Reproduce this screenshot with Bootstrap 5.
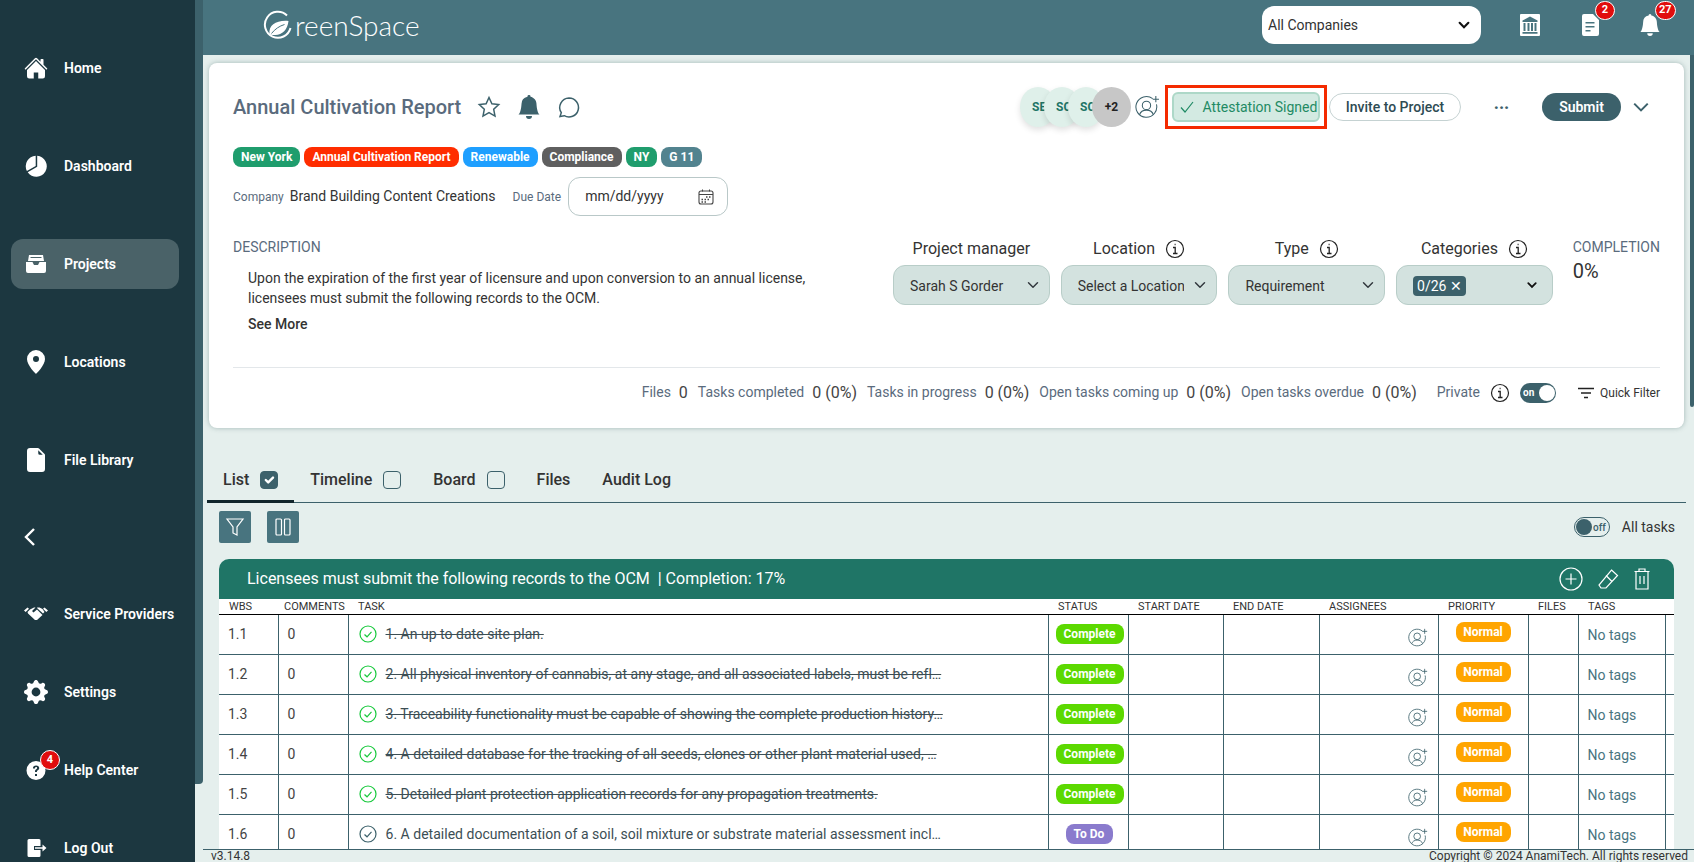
<!DOCTYPE html>
<html lang="en">
<head>
<meta charset="utf-8">
<title>GreenSpace</title>
<link href="https://cdn.jsdelivr.net/npm/bootstrap@5.3.0/dist/css/bootstrap.min.css" rel="stylesheet">
<style>
html,body{height:100%;overflow:hidden}
body{font-family:Roboto,"Liberation Sans",sans-serif;background:#e5efed;color:#333;font-size:14px}
.app-shell{height:862px;display:flex}
.side-nav{width:195px;flex:none;background:#1c3740;overflow:hidden;padding:43px 16px 0 11px}
.side-strip{width:8px;flex:none}
.side-strip i{display:block;height:784px;background:#3c616b;border-radius:0 0 4px 0}
.nav-row{height:50px;display:flex;align-items:center;color:#fff;font-weight:600;font-size:14px;padding-left:13px;border-radius:12px;margin-bottom:48px;text-decoration:none;position:relative;white-space:nowrap}
.nav-row svg{width:24px;height:24px;fill:#fff;margin-right:16px;flex:none}
.nav-row.is-active{background:#4a6268}
.nav-row.is-back{margin:-21px 0 27px;padding-left:7px}
.nav-row.is-tight{margin-bottom:28px}
.side-badge{position:absolute;left:29px;top:5px;width:20px;height:20px;border-radius:50%;background:#e10d0d;border:1px solid #fff;font-size:11px;font-weight:700;display:flex;align-items:center;justify-content:center}
.main-col{flex:1;min-width:0;display:flex;flex-direction:column;height:862px;position:relative}
.top-bar{height:55px;flex:none;background:#48747f;display:flex;align-items:center;padding:0 33px 5px 60px}
.logo-wrap{display:flex;align-items:center;color:#fff;font-family:Lato,Roboto,sans-serif;font-size:28px;font-weight:300;line-height:1}
.logo-wrap svg{width:30px;height:30px;margin-right:2px}
.bold-chev{background-image:url("data:image/svg+xml,%3csvg xmlns='http://www.w3.org/2000/svg' viewBox='0 0 16 16'%3e%3cpath fill='none' stroke='%23111' stroke-width='2.400' stroke-linecap='round' d='M3 5.500l5 5 5-5'/%3e%3c/svg%3e")}
.top-select{width:219px;height:38px;border:0;border-radius:12px;font-size:14px;padding:0 6px;margin-left:auto;margin-right:38px;color:#333;background-color:#fff;background-size:14px 14px;background-position:right 10px center}
.top-ic{position:relative;width:22px;height:26px;margin-right:38px;display:flex;justify-content:center;align-items:center}
.top-ic:last-child{margin-right:0}
.top-ic svg{width:22px;height:24px;fill:#fff}
.count-dot{position:absolute;left:16px;top:-11px;min-width:20px;height:19px;padding:0 3px;border-radius:10px;background:#e10d0d;border:1px solid #fff;color:#fff;font-size:11px;font-weight:700;display:flex;align-items:center;justify-content:center}
.page-body{flex:1;min-height:0;padding:8px 10px 0 6px;display:flex;flex-direction:column;overflow:hidden}
.info-card{height:365px;flex:none;background:#fff;border:0;border-radius:8px;box-shadow:0 0 5px rgba(40,80,80,.35);padding:0 24px;display:block}
.head-row{height:88px;display:flex;align-items:center;margin-bottom:-4px}
.doc-title{font-size:20px;font-weight:500;color:#5a6b7d;margin:0 16px 0 0;white-space:nowrap}
.head-ic{width:24px;height:24px;fill:none;stroke:#3c616b;stroke-width:1.5;margin-right:16px;flex:none}
.avatar-set{display:flex;margin-left:auto;align-items:center}
.avatar-o{width:36px;height:40px;border-radius:50%;background:#dff0ea;color:#1f7566;font-size:12px;font-weight:700;margin-right:-12px;padding-left:12px;line-height:40px;overflow:hidden;box-shadow:0 3px 6px rgba(0,0,0,.12)}
.avatar-o.more{width:39px;background:#c7c7c7;color:#222;padding:0;text-align:center;margin-right:4px;box-shadow:none}
.red-box{border:3px solid #f42a00;height:44px;width:162px;padding:4px;margin:0 2px 0 5px;flex:none}
.signed-pill{height:30px;display:flex;align-items:center;width:100%;background:#d3eae2;border:2px solid #add8c8;border-radius:6px;color:#1f8a64;font-size:14px;padding:0 0 0 4px;white-space:nowrap;justify-content:center}
.invite-btn{height:28px;width:132px;border:1px solid #c5d2d2;border-radius:14px;background:#fff;color:#2e4b53;font-weight:500;font-size:14px;padding:0;flex:none}
.dots{width:81px;text-align:center;font-weight:700;font-size:18px;color:#3c616b;line-height:1;padding-bottom:8px}
.submit-btn{height:28px;width:79px;border:0;border-radius:14px;background:#3c616b;color:#fff;font-weight:600;font-size:14px;padding:0;flex:none}
.end-chev{width:18px;height:18px;margin:0 10px 0 11px;flex:none}
.tag-row{display:flex;gap:4px;height:20px}
.tag-chip{height:20px;border-radius:8px;color:#fff;font-size:12px;font-weight:700;padding:0 8px;display:flex;align-items:center;white-space:nowrap}
.company-row{display:flex;align-items:center;height:39px;margin-top:10px}
.small-label{font-size:12px;color:#5a6b7d}
.date-box{width:160px;height:39px;border:1px solid #b9c8c8;border-radius:12px;font-size:14px;padding:0 12px 0 16px;color:#333;margin-left:7px}
.date-box::-webkit-calendar-picker-indicator{width:18px;height:18px;padding:0;background-image:url("data:image/svg+xml,%3csvg xmlns='http://www.w3.org/2000/svg' viewBox='0 0 18 18'%3e%3cg fill='none' stroke='%23444' stroke-width='1.100'%3e%3crect x='2' y='3' width='14' height='13' rx='2'/%3e%3cpath d='M2 6.500h14M5.500 1.500v2M12.500 1.500v2'/%3e%3cpath d='M9 9h1.500M12 9h1.500M4.500 11.500h1.500M7.500 11.500h1.500M10.500 11.500h1.500M4.500 14h1.500M7.500 14h1.500' stroke-width='1.500'/%3e%3c/g%3e%3c/svg%3e")}
.detail-row{display:flex;margin-top:21px;height:131px}
.desc-col{width:600px;flex:none}
.up-label{font-size:14px;color:#5a6b7d;line-height:20px}
.desc-text{margin:11px 0 0 15px;line-height:20px;color:#333;width:570px}
.see-more{margin:6px 0 0 15px;font-weight:500;line-height:20px}
.field-set{display:flex;gap:11px;margin-left:60px}
.field-col{width:156.7px}
.field-head{height:33px;display:flex;justify-content:center;align-items:center;font-size:16px;gap:10px;color:#333;margin-top:-5px;white-space:nowrap}
.info-ic{width:20px;height:20px;flex:none}
.field-sel{height:40px;border:1px solid #b8cdc8;border-radius:12px;background-color:#d3e2df;font-size:14px;padding:2px 32px 0 16px;color:#333;background-position:right 8px center;display:flex;align-items:center;white-space:nowrap}
.field-sel.bold-chev{background-position:right 12px center}
.value-chip{background:#3c616b;color:#fff;border-radius:4px;padding:0 4px;height:20px;line-height:20px;font-size:14px}
.done-col{margin-left:20px;margin-top:2px}
.done-col b{display:block;font-weight:400;font-size:20px;color:#333;margin-top:5px;line-height:22px}
.done-col .up-label{font-size:14px;line-height:16px}
.stat-row{border-top:1px solid #e3e7ea;height:50px;display:flex;align-items:center;justify-content:flex-end;font-size:14px;margin-top:-1px}
.stat-row span{color:#5a6b7d;margin-right:8px;white-space:nowrap}
.stat-row em{font-style:normal;color:#444;margin-right:10px;white-space:nowrap;font-size:16px}
.switch-on,.switch-off{width:36px;height:20px;border-radius:10px;display:flex;align-items:center;font-size:10px;font-weight:700;padding:0 1px 0 3px;justify-content:space-between}
.switch-on{background:#3c616b;color:#fff}
.switch-on i,.switch-off i{width:16px;height:16px;border-radius:50%;display:block}
.switch-on i{background:#fff}
.switch-off{border:1px solid #3c616b;color:#3c616b;background:transparent;padding:0 3px 0 1px;font-weight:500}
.switch-off i{background:#3c616b}
.quick-f{font-size:12px;color:#333;display:flex;align-items:center;gap:6px;margin-left:22px;white-space:nowrap}
.view-tabs{margin:32px -2px 0 -2px;height:43px;border-bottom:1px solid #3c616b;display:flex;align-items:flex-end;flex:none}
.view-tab{font-size:16px;font-weight:500;color:#333;height:43px;display:flex;align-items:center;padding:0 16px;gap:11px;border-bottom:3px solid transparent;margin-bottom:-1px}
.view-tab.is-on{border-color:#12262c}
.view-tab .form-check-input{width:18px;height:18px;margin:0;border-radius:4px;border-color:#3c616b;background-color:transparent;flex:none}
.view-tab .form-check-input:checked{background-color:#3c616b;border-color:#3c616b}
.tool-row{display:flex;align-items:center;height:32px;margin-top:8px;padding:0 11px 0 10px;flex:none;margin-right:-2px}
.tool-btn{width:32px;height:32px;background:#48747f;border:0;border-radius:2px;margin-right:16px;padding:0;display:flex;align-items:center;justify-content:center}
.all-tasks{margin-left:auto;display:flex;align-items:center;gap:12px}
.task-head{margin:16px 0 0 10px;width:1455px;height:40px;background:#1f7566;border-radius:10px 10px 0 0;display:flex;align-items:center;color:#fff;font-size:16px;padding:0 20px 0 28px;flex:none}
.task-head svg{width:24px;height:24px;fill:none;stroke:#fff;stroke-width:1.2;margin-left:10px}
.task-head svg:first-of-type{margin-left:auto;margin-right:3px}
.table-clip{margin-left:10px;width:1455px;flex:1;min-height:0;overflow:hidden;background:#fff}
.task-table{table-layout:fixed;width:1455px;margin:0;color:#444;font-size:14px;--bs-table-bg:#fff}
.task-table th{font-size:11px;font-weight:400;height:15px;padding:0 0 0 10px;border:0;border-bottom:1px solid #000;color:#333;white-space:nowrap;vertical-align:middle;line-height:13px}
.task-table td{height:40px;padding:0 0 0 9px;border:0;border-bottom:1px solid #3c616b;border-right:1px solid #3c616b;vertical-align:middle;white-space:nowrap;overflow:hidden}
.task-table td:last-child{border-right:0}
.task-cell{display:flex;align-items:center;gap:9px;padding-left:1px}
.task-cell svg{width:18px;height:18px;flex:none;fill:none;stroke-width:1.2}
.task-txt{color:#3c4e54;font-size:14px;letter-spacing:.02px}
.is-done{text-decoration:line-through}
.state-pill{display:block;width:68px;height:20px;line-height:20px;border-radius:8px;color:#fff;font-weight:700;font-size:12px;text-align:center;margin-left:-2px}
.state-pill.green{background:#5cd900}
.state-pill.violet{background:#8a7bcd;width:47px;margin-left:8px}
.prio-pill{display:block;width:55px;height:20px;line-height:20px;border-radius:8px;background:#ffa500;color:#fff;font-weight:700;font-size:12px;text-align:center;margin:-4px 0 0 8px}
.add-user{display:block;margin:7px 0 0 79px;width:20px;height:20px}
.no-tags{color:#48747f;padding-top:2px;display:block}
.page-foot{position:absolute;left:0;right:0;bottom:0;height:13px;background:#e5efed;border-top:1px solid #3c616b;font-size:12px;line-height:12px;color:#333;display:flex;justify-content:space-between;padding:0 6px 0 8px;overflow:hidden}
.right-thumb{position:absolute;right:0;top:55px;width:4px;height:352px;background:#3c616b;border-radius:0 0 3px 3px}
</style>
</head>
<body>
<svg width="0" height="0" class="d-none">
<symbol id="user-add" viewBox="0 0 24 24"><g fill="none" stroke="#3c616b" stroke-width="1"><path d="M17 3.500A10 10 0 1 0 20.600 9"/><circle cx="11" cy="10" r="4"/><path d="M4.300 19c1-3 3.600-4.500 6.700-4.500s5.700 1.500 6.700 4.500"/><path d="M20 1v6M17 4h6"/></g></symbol>
<symbol id="info" viewBox="0 0 20 20"><circle cx="10" cy="10" r="8.500" fill="none" stroke="#222" stroke-width="1.200"/><path d="M8 8.500h2.200v6M8 14.500h4.500M9.600 5.500h1" fill="none" stroke="#222" stroke-width="1.300"/></symbol>
<symbol id="ok-green" viewBox="0 0 18 18"><circle cx="9" cy="9" r="8" stroke="#17c93c"/><path d="M5.500 9.500l2.500 2.300 4.500-5" stroke="#17c93c"/></symbol>
<symbol id="ok-grey" viewBox="0 0 18 18"><circle cx="9" cy="9" r="8" stroke="#3c616b"/><path d="M5.500 9.500l2.500 2.300 4.500-5" stroke="#3c616b"/></symbol>
</svg>
<div class="app-shell">
  <nav class="side-nav">
    <a class="nav-row" href="#"><svg viewBox="0 0 16 16"><path d="M8.707 1.500a1 1 0 0 0-1.414 0L.646 8.146a.5.5 0 0 0 .708.708L8 2.207l6.646 6.647a.5.5 0 0 0 .708-.708L13 5.793V2.500a.5.5 0 0 0-.5-.5h-1a.5.5 0 0 0-.5.5v1.293L8.707 1.500Z"/><path d="m8 3.293 6 6V13.500a1.500 1.500 0 0 1-1.500 1.500H9.500v-4h-3v4h-3A1.500 1.500 0 0 1 2 13.500V9.293l6-6Z"/></svg>Home</a>
    <a class="nav-row" href="#"><svg viewBox="0 0 24 24"><path d="M13.200 1.800a10.500 10.500 0 1 1-9.500 16.500l9.500-5.500Z"/><path d="M11.700 1.800v10.300l-8.800 5a10.500 10.500 0 0 1 8.800-15.300Z"/></svg>Dashboard</a>
    <a class="nav-row is-active" href="#"><svg viewBox="0 0 24 24"><path d="M5 3h14l1 6H4Z M6.500 5v1h11V5Z" fill-rule="evenodd"/><path d="M2 10h6.500l1.500 3h4l1.500-3H22v9a2 2 0 0 1-2 2H4a2 2 0 0 1-2-2Z"/></svg>Projects</a>
    <a class="nav-row" href="#"><svg viewBox="0 0 16 16"><path d="M8 16s6-5.686 6-10A6 6 0 0 0 2 6c0 4.314 6 10 6 10zm0-8a2 2 0 1 1 0-4 2 2 0 0 1 0 4z"/></svg>Locations</a>
    <a class="nav-row" href="#"><svg viewBox="0 0 16 16"><path d="M4 0h5.293A1 1 0 0 1 10 .293L13.707 4a1 1 0 0 1 .293.707V14a2 2 0 0 1-2 2H4a2 2 0 0 1-2-2V2a2 2 0 0 1 2-2zm5.500 1.500v2a1 1 0 0 0 1 1h2l-3-3z"/></svg>File Library</a>
    <a class="nav-row is-back" href="#" aria-label="Collapse"><svg viewBox="0 0 24 24" style="fill:none;stroke:#fff;stroke-width:2.400"><path d="M16 4l-8 8 8 8"/></svg></a>
    <a class="nav-row is-tight" href="#"><svg viewBox="0 0 24 24"><path d="M0 8.500l3.500-3 1.500 1.200-3.300 3.300ZM24 8.500l-3.500-3-1.500 1.200 3.300 3.300Z"/><path d="M6 7.500l4-2h1.500L8 9l1.500 1.500 3.500-3 5.500 5.500-5.500 5h-2L4 11.500 3.500 10Z"/><path d="M13 5.500h2.500l3 1.500 2 3-1.500 1.500-5.500-5Z"/></svg>Service Providers</a>
    <a class="nav-row is-tight" href="#"><svg viewBox="0 0 16 16"><path d="M9.405 1.050c-.413-1.400-2.397-1.400-2.810 0l-.1.340a1.464 1.464 0 0 1-2.105.872l-.31-.17c-1.283-.698-2.686.705-1.987 1.987l.169.311c.446.820.023 1.841-.872 2.105l-.34.1c-1.400.413-1.400 2.397 0 2.810l.34.1a1.464 1.464 0 0 1 .872 2.105l-.17.31c-.698 1.283.705 2.686 1.987 1.987l.311-.169a1.464 1.464 0 0 1 2.105.872l.1.340c.413 1.400 2.397 1.400 2.810 0l.1-.340a1.464 1.464 0 0 1 2.105-.872l.31.17c1.283.698 2.686-.705 1.987-1.987l-.169-.311a1.464 1.464 0 0 1 .872-2.105l.34-.1c1.400-.413 1.400-2.397 0-2.810l-.34-.1a1.464 1.464 0 0 1-.872-2.105l.17-.31c.698-1.283-.705-2.686-1.987-1.987l-.311.169a1.464 1.464 0 0 1-2.105-.872l-.1-.340zM8 10.930a2.929 2.929 0 1 1 0-5.860 2.929 2.929 0 0 1 0 5.858z"/></svg>Settings</a>
    <a class="nav-row is-tight" href="#"><svg viewBox="0 0 24 24"><path fill-rule="evenodd" d="M12 3a9.500 9.500 0 1 1 0 19 9.500 9.500 0 0 1 0-19Zm-3 7.500h2c.1-1 .5-1.400 1.100-1.400.7 0 1 .4 1 1 0 .5-.3.8-.9 1.200-1 .7-1.200 1.300-1.200 2.700h1.900c0-.9.200-1.200 1-1.700.9-.6 1.300-1.300 1.300-2.300 0-1.700-1.200-2.600-3.100-2.600-2 0-3.100 1-3.100 2.600Zm2 5.500v2h2v-2Z"/></svg>Help Center<span class="side-badge">4</span></a>
    <a class="nav-row" href="#"><svg viewBox="0 0 24 24"><path d="M5 3h10a1.500 1.500 0 0 1 1.500 1.500V10H10v4h6.500v5.500A1.500 1.500 0 0 1 15 21H5a1.500 1.500 0 0 1-1.500-1.500v-15A1.500 1.500 0 0 1 5 3Z"/><path d="M11 11.200h7.500V8.500l4 3.500-4 3.500v-2.700H11Z"/></svg>Log Out</a>
  </nav>
  <div class="side-strip"><i></i></div>
  <div class="main-col">
    <header class="top-bar">
      <div class="logo-wrap"><svg viewBox="0 0 30 30"><path d="M24 5.500A13 13 0 1 0 27.500 18" fill="none" stroke="#fff" stroke-width="2"/><path d="M6.500 24c-1-9 7-14 19-13-1 9-7 15-15 14-1.500 0-3-.4-4-1Z" fill="#fff"/><path d="M8.500 23.500c3.500-4.500 8-7.500 13-9" stroke="#48747f" fill="none"/></svg><span>reenSpace</span></div>
      <select class="form-select bold-chev top-select" aria-label="Company"><option>All Companies</option></select>
      <div class="top-ic"><svg viewBox="0 0 22 24"><path fill-rule="evenodd" d="M2 1h18a1 1 0 0 1 1 1v20a1 1 0 0 1-1 1H2a1 1 0 0 1-1-1V2a1 1 0 0 1 1-1Zm9 2.500L3.500 7.500V9h15V7.500ZM4.500 10v8h2v-8Zm4 0v8h2v-8Zm3.500 0v8h2v-8Zm3.500 0v8h2v-8Zm-12 9v1.800h15V19Z"/></svg></div>
      <div class="top-ic"><svg viewBox="0 0 22 24"><path fill-rule="evenodd" d="M5 1h9l6 6v14a2 2 0 0 1-2 2H5a2 2 0 0 1-2-2V3a2 2 0 0 1 2-2Zm1.500 8v1.500h9V9Zm0 4v1.500h9V13Zm0 4v1.500h5V17Z"/></svg><span class="count-dot">2</span></div>
      <div class="top-ic"><svg viewBox="0 0 16 16"><path d="M8 16a2 2 0 0 0 2-2H6a2 2 0 0 0 2 2zm.995-14.901a1 1 0 1 0-1.990 0A5.002 5.002 0 0 0 3 6c0 1.098-.5 6-2 7h14c-1.500-1-2-5.902-2-7 0-2.420-1.720-4.440-4.005-4.901z"/></svg><span class="count-dot">27</span></div>
    </header>
    <div class="page-body">
      <section class="card info-card">
        <div class="head-row">
          <h1 class="doc-title">Annual Cultivation Report</h1>
          <svg class="head-ic" viewBox="0 0 24 24"><path d="M12 2.500l2.900 6.300 6.800.8-5 4.700 1.300 6.800-6-3.400-6 3.400 1.300-6.800-5-4.700 6.800-.8Z"/></svg>
          <svg class="head-ic" viewBox="0 0 16 16" style="fill:#3c616b;stroke:none"><path d="M8 16a2 2 0 0 0 2-2H6a2 2 0 0 0 2 2zm.995-14.901a1 1 0 1 0-1.990 0A5.002 5.002 0 0 0 3 6c0 1.098-.5 6-2 7h14c-1.500-1-2-5.902-2-7 0-2.420-1.720-4.440-4.005-4.901z"/></svg>
          <svg class="head-ic" viewBox="0 0 24 24"><path d="M12 3a9.500 9.500 0 1 1-4.800 17.700L3 21.500l1.300-3.800A9.500 9.500 0 0 1 12 3Z"/></svg>
          <div class="avatar-set">
            <div class="avatar-o">SE</div><div class="avatar-o">SC</div><div class="avatar-o">SC</div><div class="avatar-o more">+2</div>
            <svg width="25" height="25"><use href="#user-add"/></svg>
            <div class="red-box"><div class="signed-pill"><svg width="16" height="16" viewBox="0 0 16 16" class="me-2" fill="none" stroke="#1f8a64" stroke-width="1.200"><path d="M2 8.500l4 4.500 8-10"/></svg>Attestation Signed</div></div>
            <button class="invite-btn" type="button">Invite to Project</button>
            <div class="dots">...</div>
            <button class="submit-btn" type="button">Submit</button>
            <svg class="end-chev" viewBox="0 0 16 16" fill="none" stroke="#3c616b" stroke-width="1.800"><path d="M2 5l6 6 6-6"/></svg>
          </div>
        </div>
        <div class="tag-row">
          <span class="tag-chip" style="background:#1f9d6d">New York</span>
          <span class="tag-chip" style="background:#ff2d00">Annual Cultivation Report</span>
          <span class="tag-chip" style="background:#1e9fff">Renewable</span>
          <span class="tag-chip" style="background:#5f5f5f">Compliance</span>
          <span class="tag-chip" style="background:#1f9d6d">NY</span>
          <span class="tag-chip" style="background:#52838f">G 11</span>
        </div>
        <div class="company-row">
          <span class="small-label" style="margin-right:6px">Company</span>
          <span>Brand Building Content Creations</span>
          <span class="small-label" style="margin-left:17px">Due Date</span>
          <input class="form-control date-box" type="date" aria-label="Due Date">
        </div>
        <div class="detail-row">
          <div class="desc-col">
            <div class="up-label">DESCRIPTION</div>
            <p class="desc-text">Upon the expiration of the first year of licensure and upon conversion to an annual license, licensees must submit the following records to the OCM.</p>
            <div class="see-more">See More</div>
          </div>
          <div class="field-set">
            <div class="field-col"><div class="field-head">Project manager</div><select class="form-select field-sel" aria-label="Project manager"><option>Sarah S Gorder</option></select></div>
            <div class="field-col"><div class="field-head">Location <svg class="info-ic"><use href="#info"/></svg></div><select class="form-select field-sel" aria-label="Location"><option>Select a Locations</option></select></div>
            <div class="field-col"><div class="field-head">Type <svg class="info-ic"><use href="#info"/></svg></div><select class="form-select field-sel" aria-label="Type"><option>Requirement</option></select></div>
            <div class="field-col"><div class="field-head">Categories <svg class="info-ic"><use href="#info"/></svg></div><div class="form-select bold-chev field-sel"><span class="value-chip">0/26 ✕</span></div></div>
          </div>
          <div class="done-col"><div class="up-label">COMPLETION</div><b>0%</b></div>
        </div>
        <div class="stat-row">
          <span>Files</span><em>0</em>
          <span>Tasks completed</span><em>0 (0%)</em>
          <span>Tasks in progress</span><em>0 (0%)</em>
          <span>Open tasks coming up</span><em>0 (0%)</em>
          <span>Open tasks overdue</span><em>0 (0%)</em>
          <span style="margin-left:10px;margin-right:10px">Private</span>
          <svg class="info-ic" style="margin-right:10px"><use href="#info"/></svg>
          <div class="switch-on">on<i></i></div>
          <div class="quick-f"><svg width="16" height="16" viewBox="0 0 16 16" fill="none" stroke="#222" stroke-width="1.300"><path d="M0 3.500h16M3 8h10M6 12.500h4"/></svg>Quick Filter</div>
        </div>
      </section>
      <div class="view-tabs">
        <div class="view-tab is-on">List <input class="form-check-input" type="checkbox" checked aria-label="List"></div>
        <div class="view-tab">Timeline <input class="form-check-input" type="checkbox" aria-label="Timeline"></div>
        <div class="view-tab">Board <input class="form-check-input" type="checkbox" aria-label="Board"></div>
        <div class="view-tab">Files</div>
        <div class="view-tab">Audit Log</div>
      </div>
      <div class="tool-row">
        <button class="tool-btn" type="button" aria-label="Filter"><svg width="20" height="22" viewBox="0 0 20 22" fill="none" stroke="#fff" stroke-width="1.200"><path d="M2 3h16l-6 8v8l-4-2v-6Z"/></svg></button>
        <button class="tool-btn" type="button" aria-label="Columns"><svg width="18" height="20" viewBox="0 0 18 20" fill="none" stroke="#fff" stroke-width="1.200"><rect x="2" y="2" width="5.500" height="16" rx="1"/><rect x="10.500" y="2" width="5.500" height="16" rx="1"/></svg></button>
        <div class="all-tasks"><div class="switch-off"><i></i>off</div>All tasks</div>
      </div>
      <div class="task-head"><span>Licensees must submit the following records to the OCM &nbsp;| Completion: 17%</span>
        <svg viewBox="0 0 24 24"><circle cx="12" cy="12" r="11"/><path d="M12 6.500v11M6.500 12h11"/></svg>
        <svg viewBox="0 0 24 24"><path d="M15.500 3l6 5.500L10 21H5l-2-3Z"/><path d="M10 8.500l6 6"/></svg>
        <svg viewBox="0 0 24 24"><path d="M4.500 4.500h15M9 4.500V2h6v2.500M6 4.500V22h12V4.500M10 9v8M14 9v8"/></svg>
      </div>
      <div class="table-clip">
        <table class="table task-table">
          <colgroup><col style="width:59px"><col style="width:70px"><col style="width:700px"><col style="width:80px"><col style="width:95px"><col style="width:96px"><col style="width:119px"><col style="width:90px"><col style="width:50px"><col style="width:87px"><col style="width:9px"></colgroup>
          <thead><tr><th>WBS</th><th style="padding-left:6px">COMMENTS</th><th>TASK</th><th>STATUS</th><th>START DATE</th><th>END DATE</th><th>ASSIGNEES</th><th>PRIORITY</th><th>FILES</th><th>TAGS</th><th></th></tr></thead>
          <tbody>
            <tr><td>1.1</td><td>0</td><td><div class="task-cell"><svg><use href="#ok-green"/></svg><span class="task-txt is-done">1. An up to date site plan.</span></div></td><td><span class="state-pill green">Complete</span></td><td></td><td></td><td><svg class="add-user"><use href="#user-add"/></svg></td><td><span class="prio-pill">Normal</span></td><td></td><td><span class="no-tags">No tags</span></td><td></td></tr>
            <tr><td>1.2</td><td>0</td><td><div class="task-cell"><svg><use href="#ok-green"/></svg><span class="task-txt is-done">2. All physical inventory of cannabis, at any stage, and all associated labels, must be refl…</span></div></td><td><span class="state-pill green">Complete</span></td><td></td><td></td><td><svg class="add-user"><use href="#user-add"/></svg></td><td><span class="prio-pill">Normal</span></td><td></td><td><span class="no-tags">No tags</span></td><td></td></tr>
            <tr><td>1.3</td><td>0</td><td><div class="task-cell"><svg><use href="#ok-green"/></svg><span class="task-txt is-done">3. Traceability functionality must be capable of showing the complete production history…</span></div></td><td><span class="state-pill green">Complete</span></td><td></td><td></td><td><svg class="add-user"><use href="#user-add"/></svg></td><td><span class="prio-pill">Normal</span></td><td></td><td><span class="no-tags">No tags</span></td><td></td></tr>
            <tr><td>1.4</td><td>0</td><td><div class="task-cell"><svg><use href="#ok-green"/></svg><span class="task-txt is-done">4. A detailed database for the tracking of all seeds, clones or other plant material used, …</span></div></td><td><span class="state-pill green">Complete</span></td><td></td><td></td><td><svg class="add-user"><use href="#user-add"/></svg></td><td><span class="prio-pill">Normal</span></td><td></td><td><span class="no-tags">No tags</span></td><td></td></tr>
            <tr><td>1.5</td><td>0</td><td><div class="task-cell"><svg><use href="#ok-green"/></svg><span class="task-txt is-done">5. Detailed plant protection application records for any propagation treatments.</span></div></td><td><span class="state-pill green">Complete</span></td><td></td><td></td><td><svg class="add-user"><use href="#user-add"/></svg></td><td><span class="prio-pill">Normal</span></td><td></td><td><span class="no-tags">No tags</span></td><td></td></tr>
            <tr><td>1.6</td><td>0</td><td><div class="task-cell"><svg><use href="#ok-grey"/></svg><span class="task-txt">6. A detailed documentation of a soil, soil mixture or substrate material assessment incl…</span></div></td><td><span class="state-pill violet">To Do</span></td><td></td><td></td><td><svg class="add-user"><use href="#user-add"/></svg></td><td><span class="prio-pill">Normal</span></td><td></td><td><span class="no-tags">No tags</span></td><td></td></tr>
          </tbody>
        </table>
      </div>
    </div>
    <footer class="page-foot"><span>v3.14.8</span><span>Copyright © 2024 AnamiTech. All rights reserved</span></footer>
    <div class="right-thumb"></div>
  </div>
</div>
<script src="https://cdn.jsdelivr.net/npm/bootstrap@5.3.0/dist/js/bootstrap.bundle.min.js"></script>
</body>
</html>
